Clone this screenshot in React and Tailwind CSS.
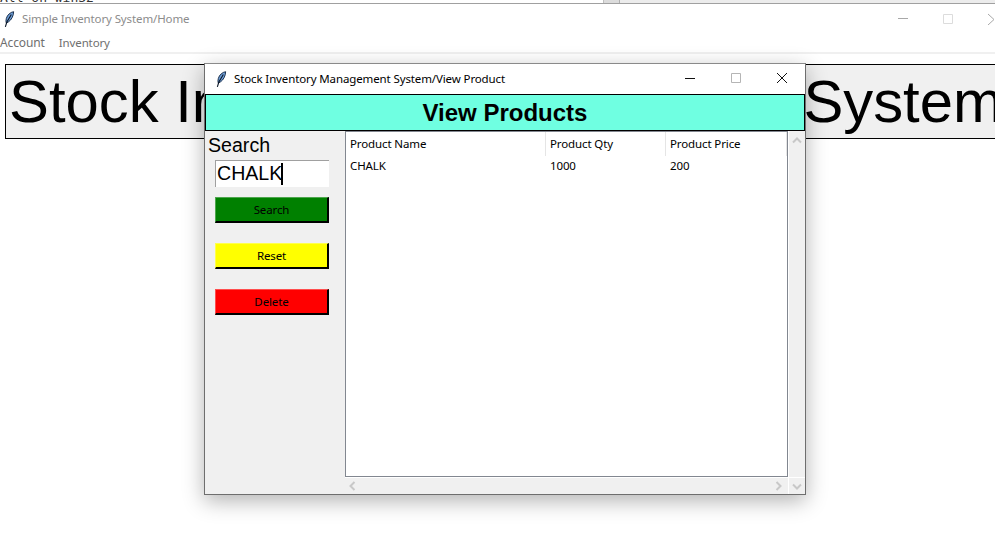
import { useState } from 'react';

const uiFont = 'font-["Noto_Sans",sans-serif]';

const Feather = ({ className }) => (
  <svg viewBox="0 0 12 18" className={className}>
    <path d="M10.5 0.5C7 1 3.5 4 2.5 8c-.5 2-.5 3.5 0 5l2.5-1.5C8 9.5 10.5 5 10.5 .5z" fill="#6f9fd8" stroke="#10243f" strokeWidth="1" />
    <path d="M8 3.5 3 12 1.5 17" fill="none" stroke="#0b1626" strokeWidth="1.2" />
  </svg>
);

const columns = [
  { label: 'Product Name', width: 'w-[200px]' },
  { label: 'Product Qty', width: 'w-[120px]' },
  { label: 'Product Price', width: 'w-[121px]' },
];

const rows = [{ name: 'CHALK', qty: '1000', price: '200' }];

const SideButton = ({ label, color }) => (
  <button
    className={`w-[114px] h-[26px] flex items-center justify-center text-[11.5px] tracking-[-0.12px] text-black border border-r-2 border-b-2 border-t-white/30 border-l-white/30 border-r-black border-b-black ${color}`}
  >
    {label}
  </button>
);

const App = () => {
  const [query, setQuery] = useState('CHALK');

  return (
    <div className={`relative w-[995px] h-[559px] overflow-hidden bg-white text-[11.5px] tracking-[-0.12px] ${uiFont}`}>
      {/* console behind the main window */}
      <div className="h-[4px] flex overflow-hidden border-b border-[#a0a0a0]">
        <div className='w-[604px] bg-white border-r border-[#c0c0c0] font-["DejaVu_Sans_Mono",monospace] text-[13px] tracking-normal leading-none text-[#333] whitespace-pre'>
          <div className="mt-[-9px]">All on win32</div>
        </div>
        <div className="w-[16px] bg-[#dcdcdc] border-r border-[#b0b0b0]" />
        <div className="flex-1 bg-[#ececec]" />
      </div>

      {/* main window */}
      <div className="h-[30px] flex items-center bg-white">
        <Feather className="w-[11px] h-[17px] ml-[4px]" />
        <span className="ml-[7px] text-[#8c8c8c]">Simple Inventory System/Home</span>
        <div className="ml-auto flex items-center mr-[-1px]">
          <svg width="12" height="12" viewBox="0 0 12 12" className="mr-[34px]">
            <path d="M1 5.5h10" stroke="#a8a8a8" />
          </svg>
          <svg width="11" height="11" viewBox="0 0 11 11" className="mr-[33px]">
            <path d="M.5.5h9v9h-9z" fill="none" stroke="#dcdcdc" />
          </svg>
          <svg width="9" height="12" viewBox="0 0 9 12">
            <path d="M1 1l6 5.5L1 12" fill="none" stroke="#a8a8a8" />
          </svg>
        </div>
      </div>
      <div className="h-[20px] flex items-center gap-[14px] bg-white border-b-2 border-[#f0f0f0] text-[#6f6f6f]">
        <span className="text-[12px]">Account</span>
        <span>Inventory</span>
      </div>

      {/* banner */}
      <div className='mt-[10px] ml-[5px] w-[1100px] h-[75px] flex items-center pl-[3px] bg-[#f0f0f0] border border-black font-["Liberation_Sans",sans-serif] text-[59.8px] tracking-normal text-black whitespace-nowrap'>
        Stock Inventory Management System
      </div>

      {/* view product dialog */}
      <div className="absolute left-[204px] top-[63px] w-[602px] h-[432px] flex flex-col bg-[#f0f0f0] border border-[#6e6e6e] border-t-[#8a8a8a] shadow-[0_6px_20px_rgba(0,0,0,0.3)]">
        <div className="h-[30px] flex items-center bg-white text-black">
          <Feather className="w-[11px] h-[17px] ml-[11px]" />
          <span className="ml-[7px]">Stock Inventory Management System/View Product</span>
          <div className="ml-auto flex items-center mr-[17px] mb-[2px]">
            <svg width="12" height="12" viewBox="0 0 12 12" className="mr-[35px]">
              <path d="M1 6.5h10" stroke="#111" />
            </svg>
            <svg width="11" height="11" viewBox="0 0 11 11" className="mr-[34px]">
              <path d="M.5.5h9v9h-9z" fill="none" stroke="#b5b5b5" />
            </svg>
            <svg width="12" height="12" viewBox="0 0 12 12">
              <path d="M1 1l10 10M11 1L1 11" stroke="#111" />
            </svg>
          </div>
        </div>
        <div className='h-[37px] flex items-center justify-center bg-[#6fffe1] border border-black font-["Liberation_Sans",sans-serif] font-bold text-[24px] tracking-normal text-black'>
          View Products
        </div>
        <div className="flex-1 flex min-h-0">
          <div className="w-[140px] shrink-0 flex flex-col">
            <div className='ml-[3px] mt-[1px] h-[26px] font-["Liberation_Sans",sans-serif] text-[19.6px] tracking-normal leading-[26px] text-black'>Search</div>
            <div className="ml-[10px] mt-[2px] w-[114px] h-[27px] flex bg-white border-t border-l border-[#a0a0a0]">
              <input
                value={query}
                onChange={(e) => setQuery(e.target.value)}
                className='w-[67px] h-[25px] pl-[1px] outline-none bg-transparent font-["Liberation_Sans",sans-serif] text-[19.6px] tracking-normal text-black'
              />
              <span className="w-[2px] h-[22px] mt-[2px] ml-[-2px] bg-black" />
            </div>
            <div className="ml-[10px] mt-[10px] flex flex-col gap-[20px]">
              <SideButton label="Search" color="bg-[#008000]" />
              <SideButton label="Reset" color="bg-[#ffff00]" />
              <SideButton label="Delete" color="bg-[#ff0000]" />
            </div>
          </div>

          <div className="flex-1 flex flex-col min-w-0">
            <div className="flex-1 flex min-h-0">
              <div className="w-[443px] bg-white border border-[#828790] text-black">
                <div className="flex h-[24px] items-center">
                  {columns.map((col) => (
                    <div key={col.label} className={`${col.width} h-full pl-[4px] flex items-center border-r border-[#e5e5e5]`}>
                      {col.label}
                    </div>
                  ))}
                </div>
                {rows.map((row) => (
                  <div key={row.name} className="flex h-[20px] items-center">
                    <div className="w-[200px] pl-[4px]">{row.name}</div>
                    <div className="w-[120px] pl-[4px]">{row.qty}</div>
                    <div className="w-[121px] pl-[4px]">{row.price}</div>
                  </div>
                ))}
              </div>
              <div className="flex-1 flex flex-col items-center border-l border-white pt-[6px]">
                <svg width="10" height="7" viewBox="0 0 10 7">
                  <path d="M1 5.5l4-4 4 4" fill="none" stroke="#c8c8c8" strokeWidth="2" />
                </svg>
              </div>
            </div>
            <div className="h-[17px] flex items-center border-t border-white">
              <svg width="7" height="10" viewBox="0 0 7 10" className="ml-[4px]">
                <path d="M5.5 1l-4 4 4 4" fill="none" stroke="#c8c8c8" strokeWidth="2" />
              </svg>
              <svg width="7" height="10" viewBox="0 0 7 10" className="ml-[419px]">
                <path d="M1.5 1l4 4-4 4" fill="none" stroke="#c8c8c8" strokeWidth="2" />
              </svg>
              <div className="ml-auto w-[17px] h-full flex items-center justify-center border-l border-white">
                <svg width="10" height="7" viewBox="0 0 10 7">
                  <path d="M1 1.5l4 4 4-4" fill="none" stroke="#c8c8c8" strokeWidth="2" />
                </svg>
              </div>
            </div>
          </div>
        </div>
      </div>
    </div>
  );
};

export default App;
